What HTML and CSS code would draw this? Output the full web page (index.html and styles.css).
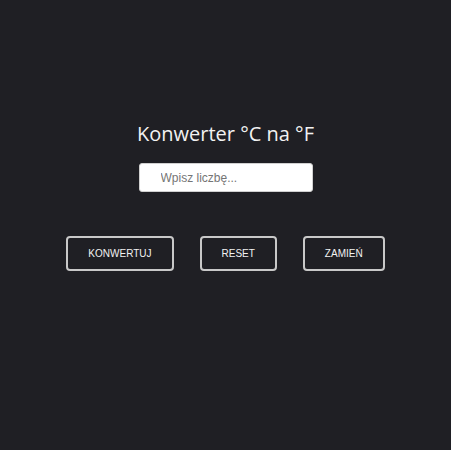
FILE: index.html
```html
<!DOCTYPE html>
<html lang="pl">
<head>
<meta charset="utf-8">
<title>Konwerter</title>
<link rel="stylesheet" href="styles.css">
</head>
<body>
<main class="app">
  <h1 class="title">Konwerter °C na °F</h1>
  <input class="field" type="text" placeholder="Wpisz liczbę...">
  <div class="actions">
    <button class="btn">KONWERTUJ</button>
    <button class="btn">RESET</button>
    <button class="btn">ZAMIEŃ</button>
  </div>
</main>
</body>
</html>
```

FILE: styles.css
```css
html, body {
  margin: 0;
  padding: 0;
  background: #1f1f24;
  height: 100%;
}
.app {
  display: flex;
  flex-direction: column;
  align-items: center;
  padding-top: 120px;
}
.title {
  margin: 0;
  font-family: "Open Sans", sans-serif;
  font-weight: 400;
  font-size: 20px;
  line-height: 28px;
  color: #f2f2f2;
}
.field {
  box-sizing: border-box;
  margin-top: 15px;
  width: 174px;
  height: 29px;
  padding: 0 0 0 21px;
  border: 1px solid #d0d0d0;
  border-radius: 3px;
  background: #fff;
  font-family: "Liberation Sans", Arial, sans-serif;
  font-size: 12px;
  color: #333;
  outline: none;
}
.field::placeholder {
  color: #757575;
}
.actions {
  display: flex;
  gap: 26px;
  margin-top: 44px;
}
.btn {
  box-sizing: border-box;
  height: 35px;
  padding: 0 20px;
  border: 2px solid #c8c8c8;
  border-radius: 4px;
  background: transparent;
  color: #f2f2f2;
  font-family: "Liberation Sans", Arial, sans-serif;
  font-size: 10px;
  line-height: 11px;
}
```
